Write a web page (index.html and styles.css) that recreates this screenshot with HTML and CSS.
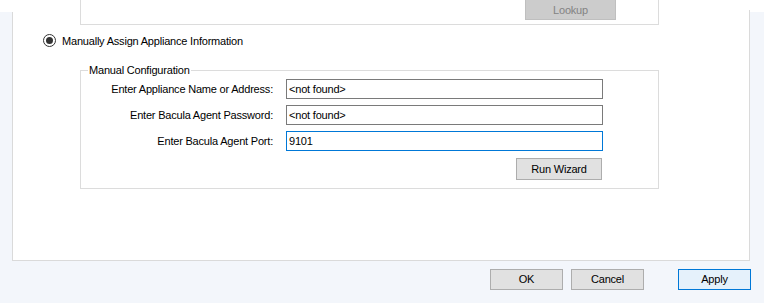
FILE: index.html
```html
<!DOCTYPE html>
<html>
<head>
<meta charset="utf-8">
<link rel="stylesheet" href="styles.css">
</head>
<body>
<div class="window">
  <div class="panel">
    <div class="group-top">
      <button class="btn btn-disabled lookup" disabled>Lookup</button>
    </div>
    <label class="radio-row">
      <span class="radio"><span class="dot"></span></span>
      <span class="radio-text">Manually Assign Appliance Information</span>
    </label>
    <fieldset class="group">
      <legend>Manual Configuration</legend>
      <div class="form">
        <label class="lbl">Enter Appliance Name or Address:</label>
        <div class="input">&lt;not found&gt;</div>
        <label class="lbl">Enter Bacula Agent Password:</label>
        <div class="input">&lt;not found&gt;</div>
        <label class="lbl">Enter Bacula Agent Port:</label>
        <div class="input focused">9101</div>
        <button class="btn wizard">Run Wizard</button>
      </div>
    </fieldset>
  </div>
  <div class="footer">
    <button class="btn">OK</button>
    <button class="btn">Cancel</button>
    <button class="btn btn-default">Apply</button>
  </div>
</div>
</body>
</html>
```
FILE: styles.css
```css
html, body {
  margin: 0;
  padding: 0;
}
body {
  width: 764px;
  height: 303px;
  overflow: hidden;
  background: linear-gradient(#ffffff 0 12px, #f3f6fb 12px);
  font-family: "Liberation Sans", Arial, sans-serif;
  font-size: 11px;
  letter-spacing: -0.2px;
  color: #000;
}
.window {
  display: flex;
  flex-direction: column;
}
.panel {
  margin-left: 12px;
  width: 738px;
  height: 261px;
  box-sizing: border-box;
  background-color: #fff;
  background-image:
    linear-gradient(#dadada, #dadada),
    linear-gradient(#dadada, #dadada);
  background-repeat: no-repeat;
  background-size: 1px calc(100% - 12px), 1px calc(100% - 10px);
  background-position: left bottom, right bottom;
  border-bottom: 1px solid #dadada;
  display: flex;
  flex-direction: column;
}
.group-top {
  margin-left: 68px;
  width: 579px;
  height: 25px;
  box-sizing: border-box;
  border: 1px solid #dcdcdc;
  border-top: none;
  display: flex;
  justify-content: flex-end;
  align-items: flex-start;
  padding-right: 42px;
}
.btn {
  font-family: inherit;
  font-size: 11px;
  letter-spacing: -0.2px;
  color: #000;
  background: #e1e1e1;
  border: 1px solid #adadad;
  border-radius: 0;
  padding: 0;
  margin: 0;
  width: 73px;
  height: 21px;
  box-sizing: border-box;
  line-height: 19px;
  text-align: center;
}
.btn-disabled {
  background: #cccccc;
  border-color: #bfbfbf;
  color: #838383;
}
.lookup {
  width: 91px;
  height: 20px;
  line-height: 18px;
  border-top: none;
}
.radio-row {
  display: flex;
  align-items: center;
  margin-top: 9px;
  margin-left: 31px;
  height: 13px;
}
.radio {
  width: 13px;
  height: 13px;
  box-sizing: border-box;
  border: 1px solid #333;
  border-radius: 50%;
  display: flex;
  align-items: center;
  justify-content: center;
  background: #fff;
}
.dot {
  width: 7px;
  height: 7px;
  border-radius: 50%;
  background: #333;
}
.radio-text {
  margin-left: 6px;
  line-height: 14px;
}
.group {
  margin: 16px 0 0 68px;
  padding: 2px 0 8px 0;
  width: 579px;
  box-sizing: border-box;
  border: 1px solid #dcdcdc;
  min-width: 0;
}
.group legend {
  margin-left: 7px;
  padding: 0 1px;
  line-height: 14px;
}
.form {
  display: grid;
  grid-template-columns: 192px 317px;
  column-gap: 13px;
  row-gap: 6px;
  align-items: center;
}
.lbl {
  text-align: right;
  line-height: 14px;
}
.input {
  height: 20px;
  box-sizing: border-box;
  border: 1px solid #7a7a7a;
  padding: 0 2px;
  line-height: 18px;
  background: #fff;
}
.input.focused {
  border-color: #0078d7;
}
.wizard {
  grid-column: 2;
  justify-self: end;
  margin-top: 1px;
  margin-right: 1px;
  width: 86px;
  height: 22px;
  line-height: 20px;
}
.footer {
  display: flex;
  justify-content: flex-end;
  gap: 8px;
  padding-right: 13px;
  margin-top: 8px;
}
.btn-default {
  margin-left: 26px;
  background: #e5f1fb;
  border-color: #0078d7;
}
```
